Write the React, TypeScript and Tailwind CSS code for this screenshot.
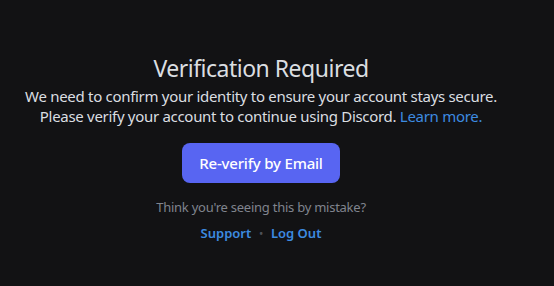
export default function App() {
  return (
    <div
      className="flex h-[286px] w-[554px] flex-col items-center bg-[#121214] pt-[52px] pr-[32px] text-center"
      style={{ fontFamily: '"Noto Sans", "Open Sans", sans-serif' }}
    >
      <h1 className="text-[23px] leading-[32px] font-normal tracking-[-0.5px] text-[#dbdee1]">
        Verification Required
      </h1>
      <p className="mt-[2px] text-[15px] leading-[20px] tracking-[-0.3px] text-[#dbdee1]">
        We need to confirm your identity to ensure your account stays secure.
        <br />
        Please verify your account to continue using Discord.{' '}
        <a className="text-[#3d8be0]">Learn more.</a>
      </p>
      <button className="mt-[17px] h-[40px] w-[158px] rounded-[8px] bg-[#5865f2] text-[15px] font-medium tracking-[-0.2px] text-white">
        Re-verify by Email
      </button>
      <p className="mt-[15px] text-[13px] leading-[18px] tracking-[-0.25px] text-[#80848e]">
        Think you're seeing this by mistake?
      </p>
      <div className="mt-[8px] flex items-center gap-[8px] text-[13px] leading-[18px] font-semibold text-[#3d8be0]">
        <a>Support</a>
        <span className="text-[10px] text-[#4e5058]">•</span>
        <a>Log Out</a>
      </div>
    </div>
  );
}
